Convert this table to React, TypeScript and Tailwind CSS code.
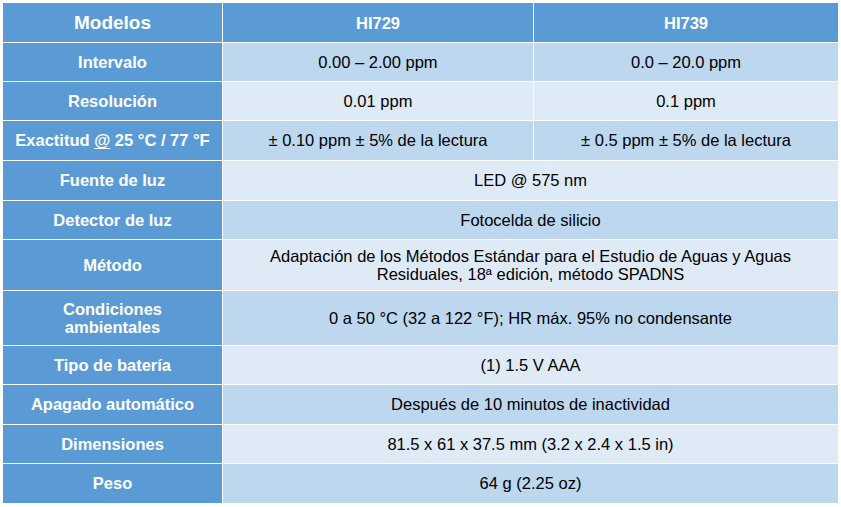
const rows: { label: string[]; values: string[][]; dark: boolean; h: string }[] = [
  { label: ['Intervalo'], values: [['0.00 – 2.00 ppm'], ['0.0 – 20.0 ppm']], dark: true, h: 'h-[38px]' },
  { label: ['Resolución'], values: [['0.01 ppm'], ['0.1 ppm']], dark: false, h: 'h-[38px]' },
  { label: ['Exactitud @ 25 °C / 77 °F'], values: [['± 0.10 ppm ± 5% de la lectura'], ['± 0.5 ppm ± 5% de la lectura']], dark: true, h: 'h-[39px]' },
  { label: ['Fuente de luz'], values: [['LED @ 575 nm']], dark: false, h: 'h-[39px]' },
  { label: ['Detector de luz'], values: [['Fotocelda de silicio']], dark: true, h: 'h-[38px]' },
  {
    label: ['Método'],
    values: [['Adaptación de los Métodos Estándar para el Estudio de Aguas y Aguas', 'Residuales, 18ª edición, método SPADNS']],
    dark: false,
    h: 'h-[50px]',
  },
  { label: ['Condiciones', 'ambientales'], values: [['0 a 50 °C (32 a 122 °F); HR máx. 95% no condensante']], dark: true, h: 'h-[54px]' },
  { label: ['Tipo de batería'], values: [['(1) 1.5 V AAA']], dark: false, h: 'h-[38px]' },
  { label: ['Apagado automático'], values: [['Después de 10 minutos de inactividad']], dark: true, h: 'h-[39px]' },
  { label: ['Dimensiones'], values: [['81.5 x 61 x 37.5 mm (3.2 x 2.4 x 1.5 in)']], dark: false, h: 'h-[38px]' },
  { label: ['Peso'], values: [['64 g (2.25 oz)']], dark: true, h: 'h-[39px]' },
]

const Label = ({ text }: { text: string }) => {
  if (!text.includes('@')) return <>{text}</>
  const [a, b] = text.split('@')
  return (
    <>
      {a}
      <span className="underline underline-offset-2">@</span>
      {b}
    </>
  )
}

export default function App() {
  return (
    <div className="bg-white w-[841px] h-[507px] p-[3px] font-['Liberation_Sans',Arial,sans-serif]">
      <div className="grid grid-cols-[219px_310px_304px] gap-px bg-white">
        <div className="h-[39px] bg-[#5B9BD5] text-white font-bold text-[19px] flex items-center justify-center pt-px">
          Modelos
        </div>
        <div className="h-[39px] bg-[#5B9BD5] text-white font-bold text-[16.5px] flex items-center justify-center pt-px">
          HI729
        </div>
        <div className="h-[39px] bg-[#5B9BD5] text-white font-bold text-[16.5px] flex items-center justify-center pt-px">
          HI739
        </div>

        {rows.map((r) => (
          <div key={r.label.join()} className="contents">
            <div className={`${r.h} bg-[#5B9BD5] text-white font-bold text-[16.5px] leading-[18.5px] flex flex-col items-center justify-center text-center`}>
              {r.label.map((l) => (
                <span key={l}>
                  <Label text={l} />
                </span>
              ))}
            </div>
            {r.values.map((v, i) => (
              <div
                key={i}
                className={`${r.h} ${r.values.length === 1 ? 'col-span-2' : ''} ${r.dark ? 'bg-[#BDD7EE]' : 'bg-[#DEEBF7]'} text-black text-[16.5px] leading-[18.5px] flex flex-col items-center justify-center text-center`}
              >
                {v.map((line) => (
                  <span key={line}>{line}</span>
                ))}
              </div>
            ))}
          </div>
        ))}
      </div>
    </div>
  )
}
